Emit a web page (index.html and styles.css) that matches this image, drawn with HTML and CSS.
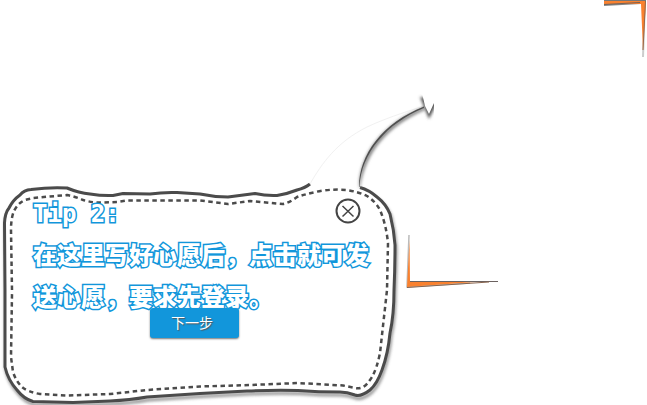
FILE: index.html
```
<!DOCTYPE html>
<html lang="zh-CN">
<head>
<meta charset="utf-8">
<title>Tip 2</title>
<link rel="stylesheet" href="styles.css">
</head>
<body>
<main class="guide">
  <svg class="art" width="647" height="405" viewBox="0 0 647 405" fill="none" aria-hidden="true">
    <defs>
      <filter id="soft" x="-20%" y="-20%" width="140%" height="140%"><feGaussianBlur stdDeviation="1.5"/></filter>
      <filter id="fine" x="-20%" y="-20%" width="140%" height="140%"><feGaussianBlur stdDeviation="0.6"/></filter>
      <clipPath id="head"><path d="M415 90H434V122H415Z"/></clipPath>
      <path id="edge" d="M360 187.500Q369 190 377 197Q386 204 390 214Q394 230 395 245Q395 268 394 290Q394 315 390 333Q388 354 382 370Q377 384 370 390Q361 397 355 395Q347 392 340 392Q319 392 298 390.500Q272 390 247 391L200 393.500L147 397Q130 400 110 401L73 402.500L33 401.500Q24 399 17 390Q8 380 5 367L5 290L4.500 223Q5 213 9 208Q13 200 20 195Q24 190 31 189.500Q50 187 67 188Q79 193 90 194Q102 196 113 195.500L123 193.500L150 194Q163 192 177 192.500L200 194Q214 197 228 197L255 193.500Q266 196 277 195.500Q287 194 297 190Q305 188 310 184"/>
    </defs>
    <use href="#edge" transform="translate(1 3)" stroke="#777" stroke-width="3" filter="url(#soft)" opacity=".8"/>
    <use href="#edge" fill="#fff" stroke="#4b4b4b" stroke-width="3" stroke-linejoin="round"/>
    <path d="M12 290L11 230Q11 218 14 211Q18 203 25 200L33 198L67 195Q77 197 83 200Q93 203 103 202.500L117 202L127 200.500L200 200.500L228 204L250 201L283 204Q289 203 297 197Q309 193 323 190.500Q336 189 347 190Q359 192 367 196Q376 202 380 210Q386 224 388 243L387 290L384 317L380 353Q377 368 372 377Q367 385 363 387Q359 389 355 388L343 385.500L298 383L250 385L200 386.500L147 390L110 394L67 395.500L40 394Q28 392 22 387Q16 381 13 372L11 357L12 294" stroke="#4b4b4b" stroke-width="2.500" stroke-dasharray="4.500 3.500" stroke-linejoin="round"/>
    <path d="M310 184C322 163 337 142 367 127C384 119 402 113 424 106" stroke="#f1f1f1" stroke-width="1"/>
    <path d="M359 187C359 155 382 123 424 107L425 110C388 126 366 151 360 188Z" fill="#888" filter="url(#soft)"/>
    <path d="M359 187C359 155 382 123 424 106.500L424 108C387 123 361 153 359.500 187Z" fill="#505050" filter="url(#fine)"/>
    <g clip-path="url(#head)">
      <path d="M420 97L429 119L437 103L430 98Z" fill="#555" filter="url(#soft)"/>
      <path d="M422 93L425 106L429 114L434 103V93Z" fill="#fff"/>
    </g>
    <path d="M604 1H645L643 57" stroke="#ccc" stroke-width="2" filter="url(#fine)"/>
    <path d="M604 4V6L641 4Z" fill="#888" filter="url(#fine)"/>
    <path d="M604 0H646L643 50L641 4H604Z" fill="#f9812f"/>
    <path d="M604 0H646V1H604Z" fill="#777"/>
    <path d="M604 4L640 2L640 3L604 5Z" fill="#716259"/>
    <path d="M645.500 1L643 50" stroke="#98694a" stroke-width="1"/>
    <path d="M409 235L407 287L470 283" stroke="#bbb" stroke-width="1.500" filter="url(#fine)"/>
    <path d="M409.500 240L410 281H489L407 287Z" fill="#f9812f"/>
    <path d="M410 281H498V282H410Z" fill="#6b6260"/>
    <path d="M407 287.500L489 282" stroke="#88644d" stroke-width="1"/>
  </svg>
  <section class="tip" aria-label="Tip 2">
    <p class="message">Tip 2:<br>在这里写好心愿后，点击就可发送心愿，要求先登录。</p>
    <button class="next" type="button">下一步</button>
    <button class="close" type="button" aria-label="关闭">
      <svg width="26" height="26" viewBox="0 0 26 26" fill="none" stroke="#444" aria-hidden="true"><circle cx="13" cy="13" r="11.500" stroke-width="2"/><path d="M7.500 8L18.500 18.500M18.500 8L7.500 18.500" stroke-width="1.500"/></svg>
    </button>
  </section>
</main>
</body>
</html>
```
FILE: styles.css
```
* { box-sizing: border-box; }
body {
  margin: 0;
  background: #fff;
  font-family: "DejaVu Sans Mono", "Noto Sans CJK SC", monospace;
}
.guide {
  position: relative;
  padding-top: 193px;
  overflow: hidden;
  min-height: 100vh;
}
.art {
  position: absolute;
  top: 0;
  left: 0;
}
.tip {
  position: relative;
  max-width: 400px;
  padding: 0 28px 0 33px;
  display: flex;
  flex-direction: column;
}
.message {
  margin: 0;
  font-size: 24px;
  font-weight: 900;
  line-height: 42px;
  color: #fff;
  -webkit-text-stroke: 3px #1296db;
  paint-order: stroke fill;
}
.next {
  width: 89px;
  height: 30px;
  margin: -11px 0 0 117px;
  padding: 0 5px 3px 0;
  border: 0;
  border-radius: 3px;
  background: #1296db;
  box-shadow: 0 1px 2px #777;
  color: #fff;
  font: 14px "Noto Sans CJK SC", sans-serif;
  text-shadow: 1px 1px 1px #555;
}
.close {
  position: absolute;
  top: 5px;
  right: 39px;
  width: 26px;
  height: 26px;
  padding: 0;
  border: 0;
  background: none;
}
.close svg { display: block; }
```
